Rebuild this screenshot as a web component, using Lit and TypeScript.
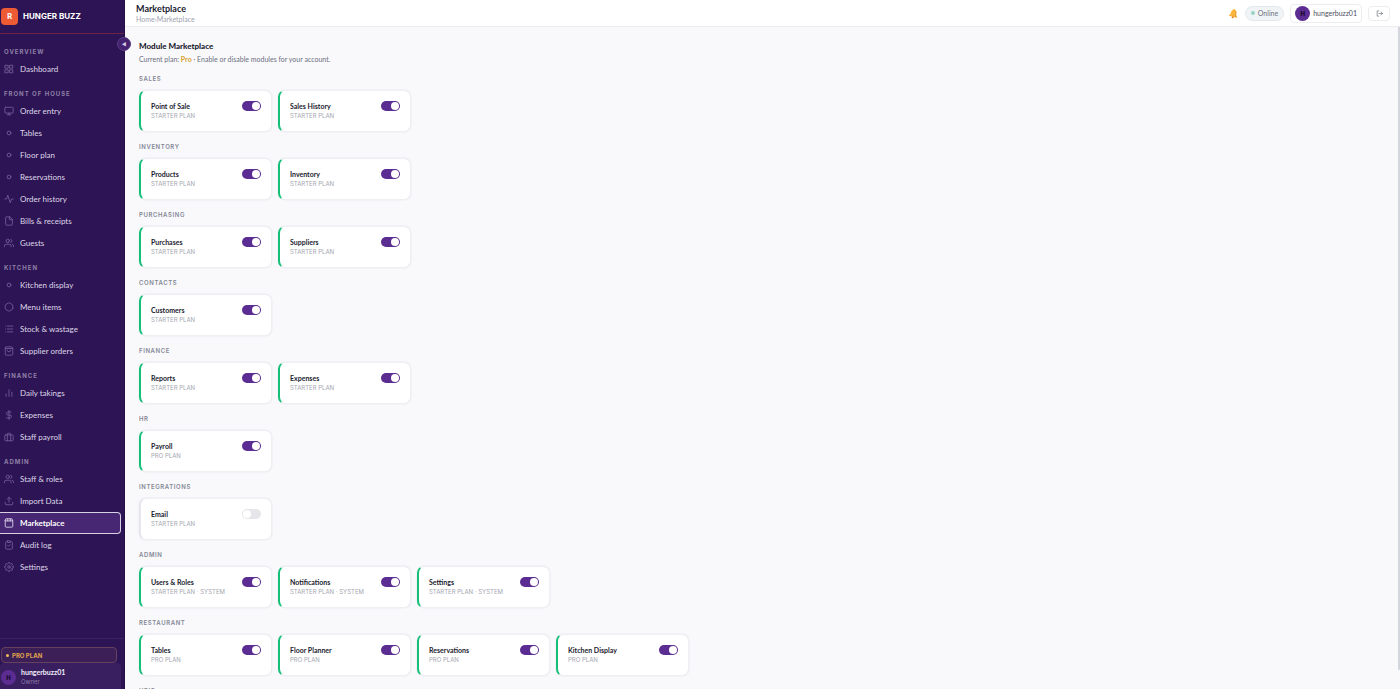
import { LitElement, html, css, svg } from "lit";
import { customElement, property } from "lit/decorators.js";
import { classMap } from "lit/directives/class-map.js";

const ICONS: Record<string, unknown> = {
  grid: svg`<rect x="3" y="3" width="7" height="7"/><rect x="14" y="3" width="7" height="7"/><rect x="14" y="14" width="7" height="7"/><rect x="3" y="14" width="7" height="7"/>`,
  monitor: svg`<rect x="2" y="3" width="20" height="14" rx="2"/><path d="M8 21h8M12 17v4"/>`,
  dot: svg`<circle cx="12" cy="12" r="4.5"/>`,
  activity: svg`<path d="M22 12h-4l-3 9L9 3l-3 9H2"/>`,
  file: svg`<path d="M13 2H6a2 2 0 0 0-2 2v16a2 2 0 0 0 2 2h12a2 2 0 0 0 2-2V9z"/><path d="M13 2v7h7"/>`,
  users: svg`<path d="M17 21v-2a4 4 0 0 0-4-4H5a4 4 0 0 0-4 4v2"/><circle cx="9" cy="7" r="4"/><path d="M23 21v-2a4 4 0 0 0-3-3.87M16 3.13a4 4 0 0 1 0 7.75"/>`,
  hexagon: svg`<path d="M21 16V8a2 2 0 0 0-1-1.73l-7-4a2 2 0 0 0-2 0l-7 4A2 2 0 0 0 3 8v8a2 2 0 0 0 1 1.73l7 4a2 2 0 0 0 2 0l7-4A2 2 0 0 0 21 16z"/>`,
  list: svg`<path d="M8 5h13M8 12h13M8 19h13M4 5h.01M4 12h.01M4 19h.01"/>`,
  bag: svg`<path d="M5 2h14l2 4v14a2 2 0 0 1-2 2H5a2 2 0 0 1-2-2V6z"/><path d="M3 6h18M16 10a4 4 0 0 1-8 0"/>`,
  bars: svg`<path d="M19 20V10M12 20V4M5 20v-6"/>`,
  dollar: svg`<path d="M12 1v22M17 5H9.500a3.500 3.500 0 0 0 0 7h5a3.500 3.500 0 0 1 0 7H6"/>`,
  briefcase: svg`<rect x="2" y="7" width="20" height="14" rx="2"/><path d="M16 21V5a2 2 0 0 0-2-2h-4a2 2 0 0 0-2 2v16"/>`,
  upload: svg`<path d="M21 15v4a2 2 0 0 1-2 2H5a2 2 0 0 1-2-2v-4M17 8l-5-5-5 5M12 3v12"/>`,
  store: svg`<path d="M3 7v13a2 2 0 0 0 2 2h14a2 2 0 0 0 2-2V7"/><path d="M5 2h14l2 5H3zM9 2v5M15 2v5"/>`,
  audit: svg`<path d="M16 4h2a2 2 0 0 1 2 2v14a2 2 0 0 1-2 2H6a2 2 0 0 1-2-2V6a2 2 0 0 1 2-2h2"/><rect x="8" y="2" width="8" height="4" rx="1"/><path d="M9 13l2 2 4-4"/>`,
  gear: svg`<circle cx="12" cy="12" r="3"/><path d="M19.4 15a1.65 1.65 0 0 0 .33 1.82l.06.06a2 2 0 1 1-2.83 2.83l-.06-.06a1.65 1.65 0 0 0-2.8 1.17V21a2 2 0 0 1-4 0v-.09A1.65 1.65 0 0 0 7.200 19.7l-.06.06a2 2 0 1 1-2.830-2.830l.06-.06A1.65 1.65 0 0 0 3.090 14H3a2 2 0 0 1 0-4h.09A1.65 1.65 0 0 0 4.300 7.200l-.06-.06a2 2 0 1 1 2.830-2.830l.06.06A1.65 1.65 0 0 0 10 3.090V3a2 2 0 0 1 4 0v.09a1.65 1.65 0 0 0 2.800 1.180l.06-.06a2 2 0 1 1 2.830 2.830l-.06.06A1.65 1.65 0 0 0 20.910 10H21a2 2 0 0 1 0 4h-.09a1.65 1.65 0 0 0-1.510 1z"/>`,
  logout: svg`<path d="M9 3H4v18h5M10 12h12M17 7l5 5-5 5"/>`,
};

const NAV: [string, [string, string][]][] = [
  ["Overview", [["grid", "Dashboard"]]],
  ["Front of house", [["monitor", "Order entry"], ["dot", "Tables"], ["dot", "Floor plan"], ["dot", "Reservations"], ["activity", "Order history"], ["file", "Bills & receipts"], ["users", "Guests"]]],
  ["Kitchen", [["dot", "Kitchen display"], ["hexagon", "Menu items"], ["list", "Stock & wastage"], ["bag", "Supplier orders"]]],
  ["Finance", [["bars", "Daily takings"], ["dollar", "Expenses"], ["briefcase", "Staff payroll"]]],
  ["Admin", [["users", "Staff & roles"], ["upload", "Import Data"], ["store", "Marketplace"], ["audit", "Audit log"], ["gear", "Settings"]]],
];

type Module = { name: string; plan: string; on: boolean };
const mod = (name: string, plan = "Starter plan", on = true): Module => ({ name, plan, on });

const SECTIONS: [string, Module[]][] = [
  ["Sales", [mod("Point of Sale"), mod("Sales History")]],
  ["Inventory", [mod("Products"), mod("Inventory")]],
  ["Purchasing", [mod("Purchases"), mod("Suppliers")]],
  ["Contacts", [mod("Customers")]],
  ["Finance", [mod("Reports"), mod("Expenses")]],
  ["HR", [mod("Payroll", "Pro plan")]],
  ["Integrations", [mod("Email", "Starter plan", false)]],
  ["Admin", [mod("Users & Roles", "Starter plan · System"), mod("Notifications", "Starter plan · System"), mod("Settings", "Starter plan · System")]],
  ["Restaurant", [mod("Tables", "Pro plan"), mod("Floor Planner", "Pro plan"), mod("Reservations", "Pro plan"), mod("Kitchen Display", "Pro plan")]],
  ["HRIS", []],
];

@customElement("ui-icon")
class UiIcon extends LitElement {
  @property() name = "";
  static styles = css`
    :host { display: block; width: 10px; height: 10px; flex: none; }
    .glyph { display: block; width: 100%; height: 100%; fill: none; stroke: currentColor; stroke-width: 2; stroke-linecap: round; stroke-linejoin: round; }
  `;
  render() {
    return html`<svg class="glyph" viewBox="0 0 24 24" aria-hidden="true">${ICONS[this.name]}</svg>`;
  }
}

@customElement("module-card")
class ModuleCard extends LitElement {
  @property({ attribute: false }) module: Module = mod("");
  static styles = css`
    :host { display: block; }
    .card {
      display: flex; justify-content: space-between; align-items: flex-start;
      padding: 10px; background: #fff; border: 1px solid #eeeef3;
      border-left: 2px solid #e6e6ec; border-radius: 7px; box-shadow: 0 0 2px #1a103018;
    }
    .on { border-left-color: #14bf78; }
    .name { display: block; font-size: 7px; line-height: 10px; font-weight: 700; color: #1b1b2f; }
    .plan { font-family: Inter, sans-serif; font-size: 6px; line-height: 10px; color: #a4a6b0; text-transform: uppercase; }
    .switch {
      appearance: none; flex: none; margin: 0; width: 19px; height: 10px; padding: 1px;
      border-radius: 5px; background: #e5e5ea; display: flex;
    }
    .switch::before { content: ""; width: 8px; height: 8px; border-radius: 50%; background: #fff; }
    .switch:checked { background: #5b2c91; justify-content: flex-end; }
  `;
  render() {
    const m = this.module;
    return html`<div class=${classMap({ card: true, on: m.on })}>
      <div>
        <label class="name" for="toggle">${m.name}</label>
        <div class="plan">${m.plan}</div>
      </div>
      <input id="toggle" class="switch" type="checkbox" role="switch" .checked=${m.on} />
    </div>`;
  }
}

@customElement("app-root")
class AppRoot extends LitElement {
  static styles = css`
    :host {
      display: grid; grid-template-columns: 125px 1fr; height: 100vh; overflow: hidden;
      font-family: Lato, Inter, sans-serif; color: #1b1b2f; background: #f9f9fc;
    }
    * { box-sizing: border-box; }
    a { color: inherit; text-decoration: none; }
    button { font: inherit; margin: 0; padding: 0; cursor: pointer; }

    .sidebar { position: relative; display: flex; flex-direction: column; min-height: 0; background: #2d1454; border-right: 1px solid #241046; }
    .brand { display: flex; align-items: center; gap: 5px; height: 34px; padding: 0 1px 1px; border-bottom: 1px solid #6e2348; }
    .logo { display: grid; place-items: center; width: 17px; height: 17px; border-radius: 4px; background: #ee5a33; color: #fff; font-size: 8px; font-weight: 900; }
    .brand-name { font-size: 8px; line-height: 12px; font-family: Inter, sans-serif; font-weight: 700; color: #fff; }
    .collapse {
      position: absolute; top: 37px; right: -7px; width: 14px; height: 14px; display: grid; place-items: center;
      border: 1px solid #5a3d86; border-radius: 50%; background: #45226f; color: #d9cdea; font-size: 5px; line-height: 6px;
    }
    .nav { flex: 1; min-height: 0; padding: 4px 3px 0 0; overflow: hidden; }
    .nav-title { margin: 0; padding: 9px 4px 2px; font-family: Inter, sans-serif; font-size: 6px; line-height: 9px; font-weight: 700; letter-spacing: 1px; text-transform: uppercase; color: #8f80a9; }
    .nav-item { display: flex; align-items: center; gap: 6px; height: 22px; padding-left: 4px; font-size: 8px; font-weight: 400; color: #ded7e8; }
    .nav-item ui-icon { color: #75629a; }
    .active { background: #472673; color: #fff; font-weight: 700; border: 1px solid #d8d0e4; border-left: 0; border-radius: 0 4px 4px 0; }
    .active ui-icon { color: #e4dcef; }
    .foot { padding-top: 8px; border-top: 1px solid #3b2362; }
    .plan-badge { display: flex; align-items: center; gap: 3px; height: 16px; margin: 0 7px 0 1px; padding-left: 4px; border: 1px solid #64415f; border-radius: 4px; background: #3d1f57; font-family: Inter, sans-serif; font-size: 6px; font-weight: 700; color: #dfa54d; }
    .plan-dot { width: 3px; height: 3px; border-radius: 50%; background: #f2bb55; }
    .account { display: flex; align-items: center; gap: 5px; height: 26px; margin-right: 3px; padding: 2px 1px 0; border-radius: 4px 4px 0 0; background: #391f60; }
    .avatar { display: grid; place-items: center; flex: none; width: 15px; height: 15px; border-radius: 50%; background: #5b2c91; color: #150828; font-family: Inter, sans-serif; font-size: 6px; font-weight: 800; }
    .account-name { font-size: 7px; line-height: 9px; font-weight: 700; color: #f2eef8; }
    .account-role { font-family: Inter, sans-serif; font-size: 6px; line-height: 9px; color: #8978a6; }

    .main { position: relative; display: flex; flex-direction: column; min-width: 0; min-height: 0; }
    .topbar { display: flex; align-items: center; justify-content: space-between; height: 27px; padding: 0 10px 0 11px; background: #fff; border-bottom: 1px solid #ececf1; flex: none; }
    .page-title { margin: 0; font-size: 9px; line-height: 12px; font-weight: 700; }
    .crumbs { font-size: 7px; line-height: 9px; color: #a0a2ae; }
    .tools { display: flex; align-items: center; gap: 6px; }
    .bell { width: 11px; height: 11px; border: 0; background: none; }
    .bell-glyph { display: block; width: 11px; height: 11px; }
    .status { display: flex; align-items: center; gap: 3px; height: 15px; padding: 0 5px; border: 1px solid #e4e8ec; border-radius: 8px; background: #f1f4f6; font-size: 7px; color: #6c7282; }
    .status-dot { width: 4px; height: 4px; border-radius: 50%; background: #96d5c1; }
    .profile { display: flex; align-items: center; gap: 3px; height: 19px; padding: 0 4px; border: 1px solid #ececf1; border-radius: 4px; background: #fff; font-size: 7px; color: #4c4f60; }
    .logout { display: grid; place-items: center; width: 22px; height: 15px; border: 1px solid #ececf1; border-radius: 4px; background: #fff; color: #555a68; }
    .logout ui-icon { width: 7px; height: 7px; }

    .content { flex: 1; min-height: 0; padding: 13px 13px 0 14px; overflow-y: auto; scrollbar-width: none; }
    .heading { margin: 0; font-size: 8px; line-height: 13px; font-weight: 900; }
    .sub { margin: 0 0 9px; font-size: 7px; line-height: 12px; color: #6c6f7e; }
    .tier { color: #d9a02c; font-weight: 700; }
    .section { margin-bottom: 10px; }
    .section-title { margin: 0 0 6px; font-family: Inter, sans-serif; font-size: 6px; line-height: 10px; font-weight: 600; letter-spacing: 0.6px; text-transform: uppercase; color: #858895; }
    .cards { display: grid; grid-template-columns: repeat(auto-fill, 133px); gap: 6px; }
    .scroll-thumb { position: absolute; top: 27px; right: 0; bottom: 19px; width: 2px; background: #d3d7dd; border-radius: 0 0 2px 2px; }
  `;

  render() {
    return html`
      <aside class="sidebar">
        <div class="brand"><span class="logo">R</span><span class="brand-name">HUNGER BUZZ</span></div>
        <button class="collapse" aria-label="Collapse sidebar">◀</button>
        <nav class="nav">
          ${NAV.map(([title, items]) => html`
            <h2 class="nav-title">${title}</h2>
            ${items.map(([icon, label]) => html`
              <a href="#" class=${classMap({ "nav-item": true, active: label === "Marketplace" })}>
                <ui-icon name=${icon}></ui-icon>${label}
              </a>`)}
          `)}
        </nav>
        <div class="foot">
          <div class="plan-badge"><span class="plan-dot"></span>PRO PLAN</div>
          <div class="account">
            <span class="avatar">H</span>
            <div><div class="account-name">hungerbuzz01</div><div class="account-role">Owner</div></div>
          </div>
        </div>
      </aside>
      <main class="main">
        <header class="topbar">
          <div>
            <h1 class="page-title">Marketplace</h1>
            <div class="crumbs"><a href="#">Home</a>›<span>Marketplace</span></div>
          </div>
          <div class="tools">
            <button class="bell" aria-label="Notifications">
              <svg class="bell-glyph" viewBox="0 0 24 24" aria-hidden="true">
                <g transform="rotate(12 12 12)">
                  <circle cx="12" cy="20" r="2.500" fill="#d98324"/>
                  <path fill="#fbb53c" d="M12 2a2 2 0 0 0-2 2C7 5 6 8 6 11c0 4-1 5-3 7v1h18v-1c-2-2-3-3-3-7 0-3-1-6-4-7a2 2 0 0 0-2-2z"/>
                  <path fill="#f0a035" d="M14 4c3 1 4 4 4 7 0 4 1 5 3 7v1h-6c1-5 1-10-1-15z"/>
                </g>
              </svg>
            </button>
            <span class="status"><span class="status-dot"></span>Online</span>
            <button class="profile"><span class="avatar">H</span>hungerbuzz01</button>
            <button class="logout" aria-label="Log out"><ui-icon name="logout"></ui-icon></button>
          </div>
        </header>
        <div class="content">
          <h2 class="heading">Module Marketplace</h2>
          <p class="sub">Current plan: <span class="tier">Pro</span> · Enable or disable modules for your account.</p>
          ${SECTIONS.map(([title, modules]) => html`
            <section class="section">
              <h3 class="section-title">${title}</h3>
              <div class="cards">${modules.map((m) => html`<module-card .module=${m}></module-card>`)}</div>
            </section>`)}
        </div>
        <div class="scroll-thumb"></div>
      </main>
    `;
  }
}
